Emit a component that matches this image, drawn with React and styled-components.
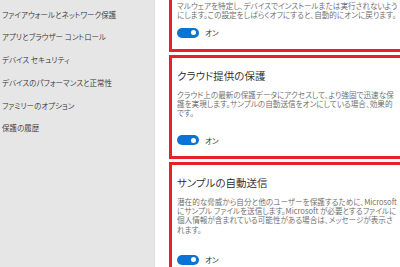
import React from 'react'
import styled, { createGlobalStyle } from 'styled-components'

const GlobalStyle = createGlobalStyle`
  html, body {
    margin: 0;
    padding: 0;
    overflow: hidden;
    background: #ffffff;
  }
  body {
    font-family: "Noto Sans CJK JP", "Noto Sans", sans-serif;
    font-feature-settings: "palt";
  }
`

const Page = styled.div`
  display: flex;
  width: 400px;
  height: 267px;
  overflow: hidden;
`

const Sidebar = styled.nav`
  width: 155px;
  flex: none;
  background: #e6e6e6;
  border-right: 1px solid #dcdcdc;
  padding: 3.5px 0 0 2px;
  box-sizing: border-box;
`

const NavItem = styled.div`
  height: 22.8px;
  line-height: 22.8px;
  font-size: 7.5px;
  font-weight: 350;
  color: #333333;
  white-space: nowrap;
`

const Main = styled.main`
  flex: 1;
  padding-left: 14px;
  margin-top: -34px;
  display: flex;
  flex-direction: column;
  gap: 3px;
`

const Card = styled.section`
  width: 245px;
  flex: none;
  border: 3px solid #e8202a;
  padding: 10px 0 11px 5px;
  box-sizing: border-box;
`

const Title = styled.h2`
  margin: 0;
  font-size: 10.5px;
  line-height: 16px;
  font-weight: 350;
  color: #262626;
`

const Desc = styled.p`
  margin: ${p => p.$top}px 0 0;
  width: 221px;
  font-size: 7.6px;
  line-height: 9.2px;
  font-weight: 350;
  color: #666666;
`

const ToggleRow = styled.div`
  display: flex;
  align-items: center;
  gap: 6px;
  margin-top: ${p => p.$gap}px;
  height: 10px;
`

const Track = styled.span`
  position: relative;
  width: 22px;
  height: 10px;
  border-radius: 5px;
  background: #0a74d6;
  &::after {
    content: "";
    position: absolute;
    right: 3px;
    top: 2.5px;
    width: 5px;
    height: 5px;
    border-radius: 50%;
    background: #ffffff;
  }
`

const ToggleLabel = styled.span`
  font-size: 7.5px;
  color: #333333;
`

const nav = [
  'ファイアウォールとネットワーク保護',
  'アプリとブラウザー コントロール',
  'デバイス セキュリティ',
  'デバイスのパフォーマンスと正常性',
  'ファミリーのオプション',
  '保護の履歴',
]

const cards = [
  {
    title: 'リアルタイム保護',
    desc: 'マルウェアを特定し、デバイスでインストールまたは実行されないようにします。この設定をしばらくオフにすると、自動的にオンに戻ります。',
    gap: 8.5,
  },
  {
    title: 'クラウド提供の保護',
    desc: 'クラウド上の最新の保護データにアクセスして、より強固で迅速な保護を実現します。サンプルの自動送信をオンにしている場合、効果的です。',
    gap: 17.5,
  },
  {
    title: 'サンプルの自動送信',
    desc: '潜在的な脅威から自分と他のユーザーを保護するために、Microsoft にサンプル ファイルを送信します。Microsoft が必要とするファイルに個人情報が含まれている可能性がある場合は、メッセージが表示されます。',
    gap: 21,
  },
]

export default function App() {
  return (
    <>
      <GlobalStyle />
      <Page>
        <Sidebar>
          {nav.map(n => (
            <NavItem key={n}>{n}</NavItem>
          ))}
        </Sidebar>
        <Main>
          {cards.map(c => (
            <Card key={c.title}>
              <Title>{c.title}</Title>
              <Desc $top={6}>{c.desc}</Desc>
              <ToggleRow $gap={c.gap}>
                <Track />
                <ToggleLabel>オン</ToggleLabel>
              </ToggleRow>
            </Card>
          ))}
        </Main>
      </Page>
    </>
  )
}
